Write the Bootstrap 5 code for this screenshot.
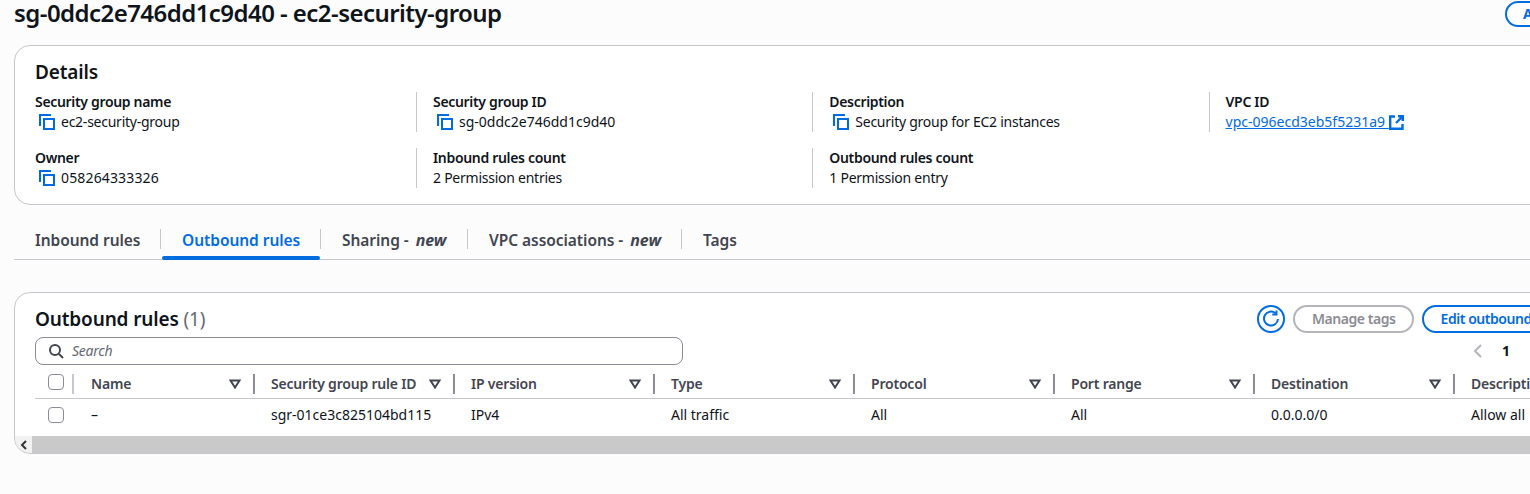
<!DOCTYPE html>
<html lang="en">
  <head>
    <meta charset="UTF-8" />
    <meta name="viewport" content="width=device-width, initial-scale=1.0" />
    <title>ec2-security-group</title>
    <link href="https://cdn.jsdelivr.net/npm/bootstrap@5.3.0/dist/css/bootstrap.min.css" rel="stylesheet" />
    <style>
      html, body { height: 100%; overflow: hidden; }
      body { background: #fcfcfc; color: #0f141a; font-family: "Noto Sans", sans-serif; font-size: 14px; line-height: 20px; letter-spacing: -0.25px; }
      .sg-page { width: 1760px; padding: 0 14px; }
      .sg-id { letter-spacing: 0; }
      .sg-num { letter-spacing: 0.15px; }

      .sg-head { height: 47px; margin-top: -2px; }
      .sg-title { font-size: 24px; line-height: 30px; font-weight: 600; margin: 0; color: #0f141a; width: 1491px; flex: none; letter-spacing: -0.55px; }
      .sg-pill { height: 26px; margin-top: 3px; border: 2px solid #006ce0; border-radius: 13px; color: #006ce0; font-weight: 700; font-size: 14px; line-height: 22px; padding: 0 16px; background: #fff; }

      .sg-card { border: 1px solid #c6c6cd; border-radius: 16px; background: #fff; }
      .sg-details { height: 160px; padding: 14px 20px 0; }
      .sg-card-title { font-size: 19px; line-height: 24px; font-weight: 600; margin: 0; color: #0f141a; letter-spacing: -0.15px; }
      .sg-grid { display: grid; grid-template-columns: 381px repeat(3, 396.3px); row-gap: 16px; margin-top: 8px; }
      .sg-cell { height: 40px; }
      .sg-cell + .sg-cell { border-left: 1px solid #c6c6cd; padding-left: 16px; }
      .sg-cell.sg-row-start { border-left: 0; padding-left: 0; }
      .sg-label { font-weight: 600; letter-spacing: -0.32px; }
      .sg-copy { padding-left: 4px; gap: 6px; }
      .sg-copy svg, .sg-link svg { flex: none; }
      .sg-link { color: #006ce0; text-decoration: underline; }

      .sg-tabs { margin-top: 20px; height: 35px; border-bottom: 1px solid #c6c6cd; }
      .sg-tab { height: 34px; padding: 0 0 0 21px; font-size: 15.5px; font-weight: 600; color: #424650; line-height: 30px; white-space: nowrap; position: relative; letter-spacing: -0.05px; }
      .sg-tab + .sg-tab { padding-left: 22px; }
      .sg-tab i { font-weight: 700; font-size: 16px; margin-left: 3px; }
      .sg-tab + .sg-tab::before { content: ""; position: absolute; left: 0; top: 4px; height: 20px; border-left: 1px solid #c6c6cd; }
      .sg-tab.sg-on { color: #006ce0; }
      .sg-tab.sg-on::after { content: ""; position: absolute; left: 2px; right: 0; bottom: -1px; height: 4px; background: #006ce0; border-radius: 2px; }

      .sg-rules { margin-top: 32px; height: 162px; overflow: hidden; padding-top: 8px; }
      .sg-rules-top { padding: 0 20px; height: 36px; }
      .sg-count { color: #656871; font-weight: 400; }
      .sg-round { width: 28px; height: 28px; border: 2px solid #006ce0; border-radius: 50%; background: #fff; padding: 0; flex: none; }
      .sg-btn { height: 28px; border: 2px solid #006ce0; border-radius: 14px; background: #fff; color: #006ce0; font-weight: 600; padding: 0 16px 0 17px; line-height: 24px; white-space: nowrap; letter-spacing: -0.45px; }
      .sg-btn-off { border-color: #b4b4bb; color: #8c8c94; }
      .sg-actions { margin-left: 574px; gap: 8px; }

      .sg-filter { padding: 0 20px; height: 28px; }
      .sg-search { width: 648px; height: 28px; border: 1px solid #8c8c94; border-radius: 8px; padding-left: 12px; gap: 8px; background: #fff; }
      .sg-search span { font-style: italic; color: #656871; }
      .sg-pager { margin-left: 790px; gap: 19px; font-weight: 700; }

      .sg-table { width: auto; table-layout: fixed; margin: 5px 0 0 20px; border-collapse: collapse; }
      .sg-table > thead > tr > th, .sg-table > tbody > tr > td { padding: 0; background: transparent; box-shadow: none; color: #0f141a; font-size: 14px; }
      .sg-table > thead > tr > th { height: 28px; vertical-align: top; padding-top: 4px; border-bottom: 1px solid #c6c6cd; color: #424650; font-weight: 600; letter-spacing: -0.2px; }
      .sg-table > tbody > tr > td { height: 38px; border: 0; padding-left: 16px; vertical-align: middle; padding-bottom: 4px; white-space: nowrap; letter-spacing: 0; }
      .sg-table > tbody > tr > td.sg-check-col { padding-left: 13px; }
      .sg-table > tbody > tr > td.sg-col-name { padding-left: 17px; }
      .sg-check-col { width: 39px; }
      .sg-col { width: 200px; }
      .sg-col-name { width: 181px; }
      .sg-th-in { height: 20px; padding-left: 16px; padding-right: 12px; border-right: 2px solid #8c8c94; white-space: nowrap; }
      .sg-col-name .sg-th-in { padding-left: 17px; }
      .sg-th-first { height: 20px; padding-left: 13px; border-right: 2px solid #c6c6cd; }
      .sg-box { display: block; width: 16px; height: 16px; border: 1px solid #8c8c94; border-radius: 4px; background: #fff; }

      .sg-scroll { height: 18px; background: #c9c9c9; width: 1545px; border-bottom: 1px solid #dcdcdc; }
      .sg-scroll-left { width: 17px; background: #f1f1f1; }
      .sg-scroll-end { width: 30px; background: #f1f1f1; margin-left: auto; }
    </style>
  </head>
  <body>
    <div class="sg-page">
      <!-- Title -->
      <div class="sg-head d-flex align-items-start">
        <h1 class="sg-title">sg-0ddc2e746dd1c9d40 - ec2-security-group</h1>
        <button class="sg-pill" type="button">Actions</button>
      </div>

      <!-- Details -->
      <section class="sg-card sg-details">
        <h2 class="sg-card-title">Details</h2>
        <div class="sg-grid">
          <div class="sg-cell">
            <div class="sg-label">Security group name</div>
            <div class="d-flex align-items-center sg-copy"><svg width="16" height="16" viewBox="0 0 16 16" fill="none" stroke="#006ce0" stroke-width="2"><path d="M1 12V1h11"/><rect x="5" y="5" width="10" height="10"/></svg>ec2-security-group</div>
          </div>
          <div class="sg-cell">
            <div class="sg-label">Security group ID</div>
            <div class="d-flex align-items-center sg-copy"><svg width="16" height="16" viewBox="0 0 16 16" fill="none" stroke="#006ce0" stroke-width="2"><path d="M1 12V1h11"/><rect x="5" y="5" width="10" height="10"/></svg><span class="sg-id">sg-0ddc2e746dd1c9d40</span></div>
          </div>
          <div class="sg-cell">
            <div class="sg-label">Description</div>
            <div class="d-flex align-items-center sg-copy"><svg width="16" height="16" viewBox="0 0 16 16" fill="none" stroke="#006ce0" stroke-width="2"><path d="M1 12V1h11"/><rect x="5" y="5" width="10" height="10"/></svg>Security group for EC2 instances</div>
          </div>
          <div class="sg-cell">
            <div class="sg-label">VPC ID</div>
            <div class="d-flex align-items-center sg-link"><span class="sg-id">vpc-096ecd3eb5f5231a9&nbsp;</span><svg width="15" height="15" viewBox="0 0 15 15" fill="none" stroke="#006ce0" stroke-width="2.4"><path d="M6 1.5H1.2v12.3h12.3V9"/><path d="M9 1.2h4.8V6M13.5 1.5L7 8"/></svg></div>
          </div>
          <div class="sg-cell sg-row-start">
            <div class="sg-label">Owner</div>
            <div class="d-flex align-items-center sg-copy"><svg width="16" height="16" viewBox="0 0 16 16" fill="none" stroke="#006ce0" stroke-width="2"><path d="M1 12V1h11"/><rect x="5" y="5" width="10" height="10"/></svg><span class="sg-num">058264333326</span></div>
          </div>
          <div class="sg-cell">
            <div class="sg-label">Inbound rules count</div>
            <div>2 Permission entries</div>
          </div>
          <div class="sg-cell">
            <div class="sg-label">Outbound rules count</div>
            <div>1 Permission entry</div>
          </div>
        </div>
      </section>

      <!-- Tabs -->
      <div class="sg-tabs d-flex">
        <div class="sg-tab" style="width: 146px">Inbound rules</div>
        <div class="sg-tab sg-on" style="width: 160px">Outbound rules</div>
        <div class="sg-tab" style="width: 147px">Sharing - <i>new</i></div>
        <div class="sg-tab" style="width: 214px">VPC associations - <i>new</i></div>
        <div class="sg-tab">Tags</div>
      </div>

      <!-- Outbound rules -->
      <section class="sg-card sg-rules">
        <div class="sg-rules-top d-flex align-items-center">
          <h2 class="sg-card-title" style="width: 648px">Outbound rules <span class="sg-count">(1)</span></h2>
          <div class="d-flex align-items-center sg-actions">
            <button class="sg-round d-flex align-items-center justify-content-center" type="button" aria-label="Refresh">
              <svg width="18" height="18" viewBox="0 0 18 18" fill="none" stroke="#006ce0" stroke-width="2"><path d="M13.5 3.2A7 7 0 1 0 16 9"/><path d="M14.5 0.5v4h-4.2"/></svg>
            </button>
            <button class="sg-btn sg-btn-off" type="button">Manage tags</button>
            <button class="sg-btn" type="button">Edit outbound rules</button>
          </div>
        </div>
        <div class="sg-filter d-flex align-items-center">
          <div class="sg-search d-flex align-items-center">
            <svg width="16" height="16" viewBox="0 0 16 16" fill="none" stroke="#424650" stroke-width="2"><circle cx="7" cy="7" r="5"/><path d="M11 11l4 4"/></svg>
            <span>Search</span>
          </div>
          <div class="sg-pager d-flex align-items-center">
            <svg width="10" height="14" viewBox="0 0 10 14" fill="none" stroke="#b4b4bb" stroke-width="2"><path d="M8 1L2 7l6 6"/></svg>
            <span>1</span>
          </div>
        </div>
        <table class="table sg-table">
          <thead>
            <tr id="sg-head-row">
              <th class="sg-check-col"><div class="sg-th-first"><span class="sg-box"></span></div></th>
            </tr>
          </thead>
          <tbody>
            <tr>
              <td class="sg-check-col"><span class="sg-box"></span></td>
              <td class="sg-col-name">–</td>
              <td class="sg-col">sgr-01ce3c825104bd115</td>
              <td class="sg-col">IPv4</td>
              <td class="sg-col">All traffic</td>
              <td class="sg-col">All</td>
              <td class="sg-col">All</td>
              <td class="sg-col">0.0.0.0/0</td>
              <td class="sg-col">Allow all</td>
            </tr>
          </tbody>
        </table>
        <div class="sg-scroll d-flex">
          <div class="sg-scroll-left d-flex align-items-center justify-content-center">
            <svg width="8" height="10" viewBox="0 0 8 10" fill="none" stroke="#333" stroke-width="2"><path d="M6 1L2 5l4 4"/></svg>
          </div>
          <div class="sg-scroll-end"></div>
        </div>
      </section>
    </div>

    <script src="https://cdn.jsdelivr.net/npm/bootstrap@5.3.0/dist/js/bootstrap.bundle.min.js"></script>
    <script>
      const columns = ['Name', 'Security group rule ID', 'IP version', 'Type', 'Protocol', 'Port range', 'Destination', 'Description'];
      const headRow = document.getElementById('sg-head-row');
      columns.forEach((name, i) => {
        const th = document.createElement('th');
        th.className = i === 0 ? 'sg-col-name' : 'sg-col';
        th.innerHTML = `<div class="sg-th-in d-flex align-items-center justify-content-between"><span>${name}</span><svg width="12" height="10" viewBox="0 0 12 10" fill="none" stroke="#424650" stroke-width="2"><path d="M1.5 1.5h9L6 8.5z"/></svg></div>`;
        headRow.appendChild(th);
      });
    </script>
  </body>
</html>
